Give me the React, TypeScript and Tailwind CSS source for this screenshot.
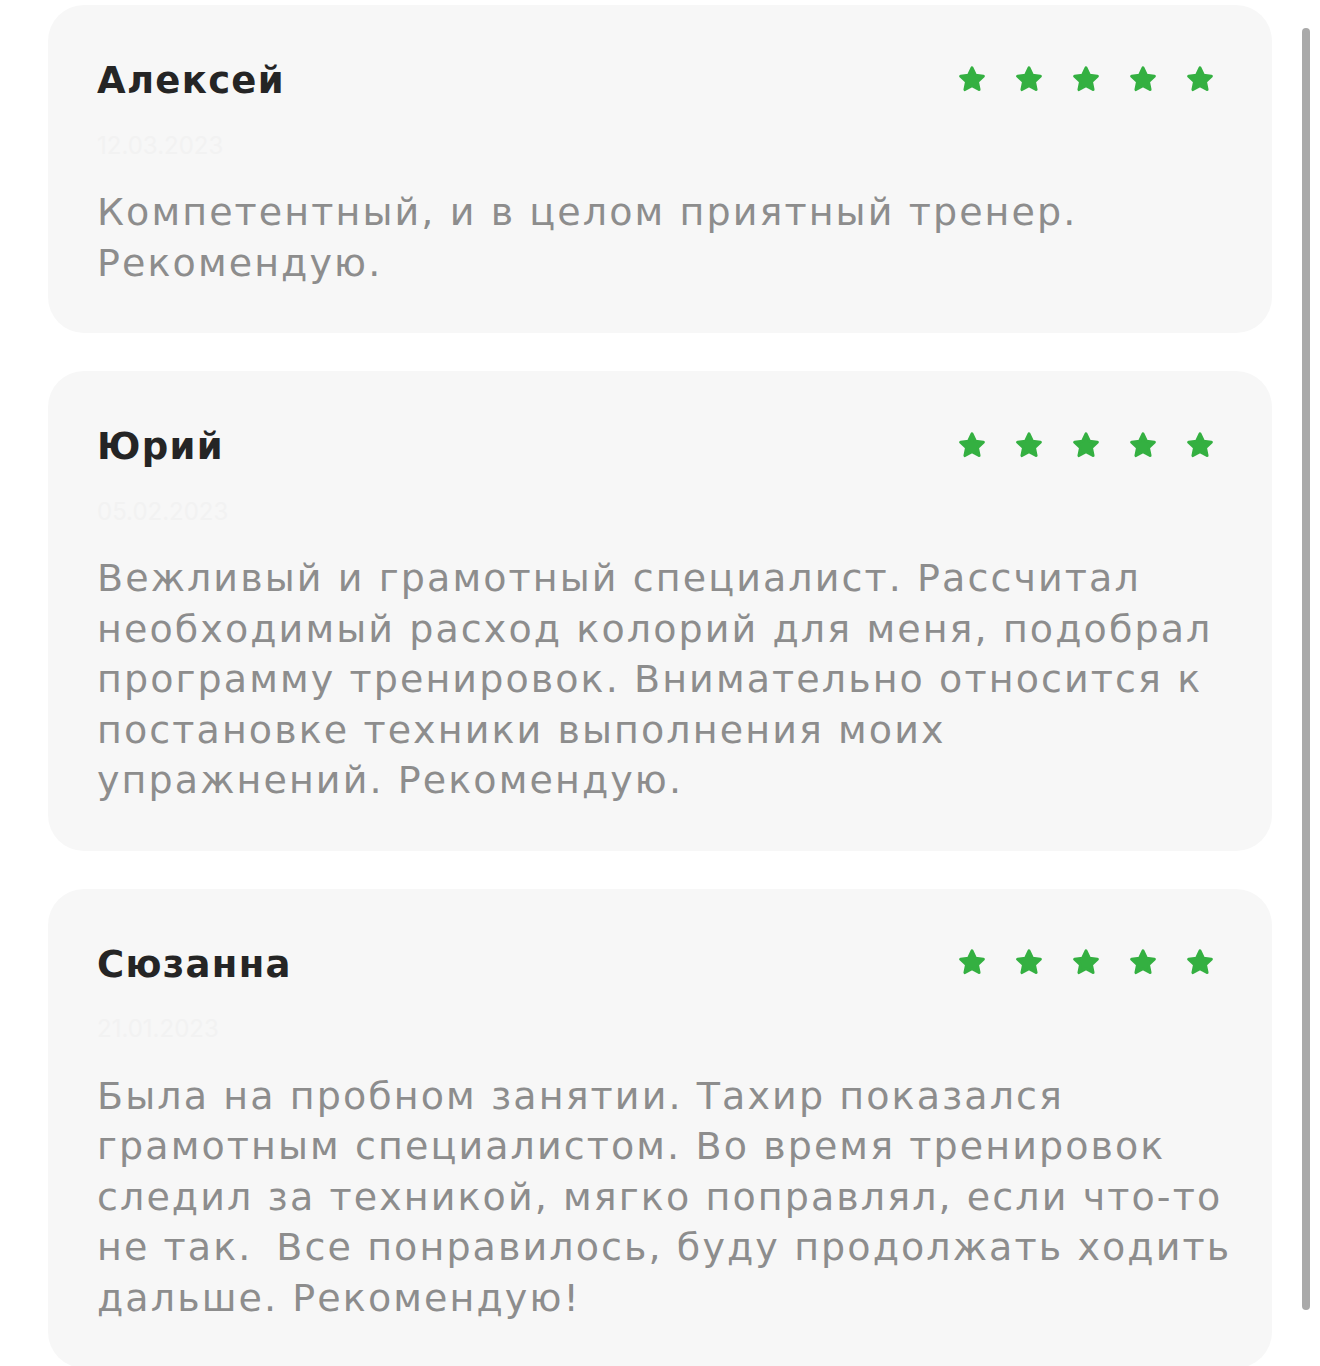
import React from "react";

const Star = () => (
  <svg width="30" height="29" viewBox="0 0 24 23" className="block">
    <path
      d="M12 2.2l2.75 5.9 6.35.75-4.7 4.4 1.25 6.3L12 16.4l-5.65 3.15 1.25-6.3-4.7-4.4 6.35-.75z"
      fill="#34b041"
      stroke="#34b041"
      strokeWidth="2.4"
      strokeLinejoin="round"
    />
  </svg>
);

type Review = { name: string; date: string; lines: string[] };

const reviews: Review[] = [
  {
    name: "Алексей",
    date: "12.03.2023",
    lines: ["Компетентный, и в целом приятный тренер.", "Рекомендую."],
  },
  {
    name: "Юрий",
    date: "05.02.2023",
    lines: [
      "Вежливый и грамотный специалист. Рассчитал",
      "необходимый расход колорий для меня, подобрал",
      "программу тренировок. Внимательно относится к",
      "постановке техники выполнения моих",
      "упражнений. Рекомендую.",
    ],
  },
  {
    name: "Сюзанна",
    date: "21.01.2023",
    lines: [
      "Была на пробном занятии. Тахир показался",
      "грамотным специалистом. Во время тренировок",
      "следил за техникой, мягко поправлял, если что-то",
      "не так. \u2009Все понравилось, буду продолжать ходить",
      "дальше. Рекомендую!",
    ],
  },
];

function Card({ r }: { r: Review }) {
  return (
    <div className="rounded-[36px] bg-[#f7f7f7] pl-[49px] pr-[50px] pt-[51px] pb-[45px]">
      <div className="flex items-center justify-between h-[48px] pr-[7px]">
        <div
          className="text-[37px] font-bold text-[#252525] tracking-[1.3px] leading-[48px] pt-[2px]"
          style={{ fontFamily: "'DejaVu Sans', sans-serif" }}
        >
          {r.name}
        </div>
        <div className="flex items-center gap-[27px] pb-[2px]">
          <Star />
          <Star />
          <Star />
          <Star />
          <Star />
        </div>
      </div>
      <div className="h-[83px] flex items-center text-[24px] text-[#f2f2f2] leading-[30px]">
        {r.date}
      </div>
      <div
        className="text-[38px] leading-[50.5px] text-[#8d8d8d] tracking-[2.1px]"
        style={{ fontFamily: "'DejaVu Sans', sans-serif" }}
      >
        {r.lines.map((l, i) => (
          <div key={i} className="whitespace-pre">
            {l}
          </div>
        ))}
      </div>
    </div>
  );
}

export default function App() {
  return (
    <div
      className="relative w-[1320px] h-[1366px] overflow-hidden bg-white"
      style={{ fontFamily: "Inter, 'Noto Sans', sans-serif" }}
    >
      <div className="flex flex-col gap-[38px] pl-[48px] pr-[48px] pt-[5px]">
        {reviews.map((r) => (
          <Card key={r.name} r={r} />
        ))}
      </div>
      <div className="absolute left-[1302px] top-[28px] w-[8px] h-[1282px] rounded-full bg-[#a9a9a9]" />
    </div>
  );
}
